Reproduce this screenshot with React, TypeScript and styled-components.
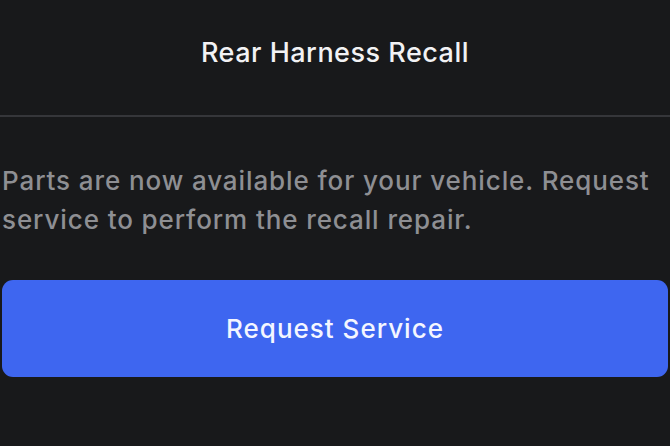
import React from 'react'
import styled, { createGlobalStyle } from 'styled-components'

const GlobalStyle = createGlobalStyle`
  html, body {
    margin: 0;
    padding: 0;
    background: #18191b;
  }
  body {
    font-family: Inter, "Noto Sans", sans-serif;
    -webkit-font-smoothing: antialiased;
  }
`

const Sheet = styled.div`
  width: 670px;
  height: 446px;
  background: #18191b;
  display: flex;
  flex-direction: column;
  box-sizing: border-box;
  overflow: hidden;
`

const Header = styled.div`
  height: 117px;
  display: flex;
  align-items: flex-start;
  justify-content: center;
  padding-top: 36px;
  box-sizing: border-box;
  border-bottom: 2px solid #35363a;
`

const Title = styled.h1`
  margin: 0;
  font-size: 27px;
  font-weight: 500;
  letter-spacing: 0.5px;
  color: #f2f2f4;
  line-height: 34px;
`

const Body = styled.div`
  padding: 44px 2px 0 2px;
  display: flex;
  flex-direction: column;
  gap: 41px;
`

const Message = styled.p`
  margin: 0;
  font-size: 26px;
  font-weight: 500;
  letter-spacing: 0.9px;
  line-height: 39px;
  color: #8e8f93;
`

const PrimaryButton = styled.button`
  height: 97px;
  width: 100%;
  border: none;
  border-radius: 11px;
  background: #3e66f0;
  color: #f4f6ff;
  font-family: inherit;
  font-size: 26px;
  font-weight: 500;
  letter-spacing: 1px;
  cursor: pointer;
`

export default function App() {
  return (
    <>
      <GlobalStyle />
      <Sheet>
        <Header>
          <Title>Rear Harness Recall</Title>
        </Header>
        <Body>
          <Message>
            Parts are now available for your vehicle. Request service to perform the recall repair.
          </Message>
          <PrimaryButton>Request Service</PrimaryButton>
        </Body>
      </Sheet>
    </>
  )
}
